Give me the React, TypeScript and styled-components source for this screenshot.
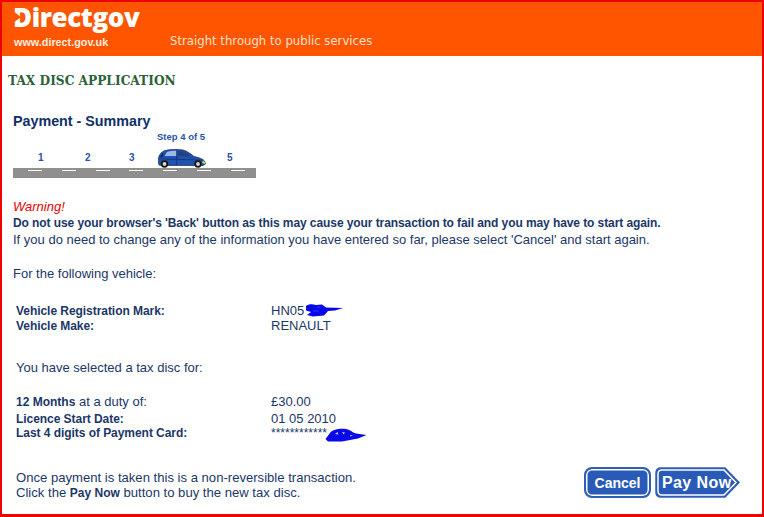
import React from "react";
import styled, { createGlobalStyle } from "styled-components";

const GlobalStyle = createGlobalStyle`
  html, body {
    margin: 0;
    padding: 0;
    background: #fff;
  }
  body {
    font-family: "Liberation Sans", Arial, sans-serif;
  }
`;

function CarIcon() {
  return (
    <svg width="48" height="19" viewBox="0 0 48 19">
      <path
        d="M0.500 14 L0.500 9 C1 6 3 3 7 1.500 C12 0.200 20 0.200 25 1 C29 2 33 5 36 7.500 C41 8.500 45 10 46.500 12 L47.500 15 L45 16.500 L4 16.500 L1 16 Z"
        fill="#1f52ae"
        stroke="#12285e"
        strokeWidth="0.700"
      />
      <path d="M9 3 C12 1.800 15 1.800 18 1.800 L18 7 L6.500 7 Z" fill="#9db8e2" />
      <path d="M19.500 1.800 C24 2 29 4.500 33 7.300 L19.500 7 Z" fill="#27407c" />
      <path d="M2 8 L5 3.500 L5.500 7 L3 9 Z" fill="#0f2a6a" />
      <path d="M18.700 7 L18.700 16 M3 10 L45 11" stroke="#12285e" strokeWidth="0.600" fill="none" />
      <path d="M45 11.500 L47.500 13.500 L47 15 L44 14 Z" fill="#c8d84a" />
      <circle cx="6.500" cy="15" r="3.700" fill="#161616" />
      <circle cx="6.500" cy="15" r="1.900" fill="#d8d8c8" />
      <circle cx="40" cy="15" r="3.700" fill="#161616" />
      <circle cx="40" cy="15" r="1.900" fill="#d8d8c8" />
    </svg>
  );
}

function RegScribble() {
  return (
    <svg width="39" height="14" viewBox="0 0 39 14">
      <path
        d="M1 3 C4 0.500 8 1 11 2 L17 1.500 L21 4.500 L38 5 L30 7.500 L23 8 L19 12.500 L8 13.500 L2 12 L6 9 L1 7.500 Z"
        fill="#0808e8"
      />
      <path d="M12 4 L16 4 M8 8 L14 8" stroke="#3a3af0" strokeWidth="0.800" />
    </svg>
  );
}

function CardScribble() {
  return (
    <svg width="42" height="14" viewBox="0 0 42 14">
      <path
        d="M0.500 11 L5 5 C8 1 15 0.500 21 1 C25 1.500 27 4.500 31 5.500 L41.500 7 L33 10.500 L25 12 L17 13.500 L3 13.500 Z"
        fill="#0808e8"
      />
      <path d="M10 6 L12.500 4 L13.500 6.500 Z M17 4 L20 4.500 L18.500 6.500 Z M25 7 L28 7.500 L25.500 8.500 Z" fill="#c8c8ff" />
    </svg>
  );
}

export default function App() {
  return (
    <Frame>
      <GlobalStyle />
      <Header>
        <Brand>
          <LogoWrap>
            <Logo>Directgov</Logo>
            <LogoNotch />
          </LogoWrap>
          <BrandUrl>www.direct.gov.uk</BrandUrl>
        </Brand>
        <Tagline>Straight through to public services</Tagline>
      </Header>

      <Main>
        <AppTitle>TAX DISC APPLICATION</AppTitle>
        <PageTitle>Payment - Summary</PageTitle>

        <Progress>
          <StepCaption>Step 4 of 5</StepCaption>
          <Steps>
            <StepNumber $width={47}>1</StepNumber>
            <StepNumber $width={44}>2</StepNumber>
            <StepNumber $width={42}>3</StepNumber>
            <CarSlot>
              <CarIcon />
            </CarSlot>
            <StepNumber $width={30}>5</StepNumber>
          </Steps>
          <Road>
            {Array.from({ length: 7 }).map((_, i) => (
              <RoadDash key={i} />
            ))}
          </Road>
        </Progress>

        <WarningTitle>Warning!</WarningTitle>
        <WarningBold>
          Do not use your browser's 'Back' button as this may cause your transaction to fail and you
          may have to start again.
        </WarningBold>
        <Line $top={2}>
          If you do need to change any of the information you have entered so far, please select
          'Cancel' and start again.
        </Line>

        <Line $top={20}>For the following vehicle:</Line>

        <InfoGroup $top={22}>
          <InfoRow>
            <InfoLabel>Vehicle Registration Mark:</InfoLabel>
            <InfoValue>
              HN05
              <ScribbleSlot $left={34} $top={0}>
                <RegScribble />
              </ScribbleSlot>
            </InfoValue>
          </InfoRow>
          <InfoRow>
            <InfoLabel>Vehicle Make:</InfoLabel>
            <InfoValue>RENAULT</InfoValue>
          </InfoRow>
        </InfoGroup>

        <Indented $top={28}>You have selected a tax disc for:</Indented>

        <InfoGroup $top={19}>
          <InfoRow>
            <InfoPlain>
              <b>12 Months</b> at a duty of:
            </InfoPlain>
            <InfoValue>£30.00</InfoValue>
          </InfoRow>
          <InfoRow $shift={2}>
            <InfoLabel>Licence Start Date:</InfoLabel>
            <InfoValue>01 05 2010</InfoValue>
          </InfoRow>
          <InfoRow $shift={-1}>
            <InfoLabel>Last 4 digits of Payment Card:</InfoLabel>
            <MaskedValue>
              ************
              <ScribbleSlot $left={54} $top={2}>
                <CardScribble />
              </ScribbleSlot>
            </MaskedValue>
          </InfoRow>
        </InfoGroup>

        <Footer>
          <FooterText>
            Once payment is taken this is a non-reversible transaction.
            <br />
            Click the <FooterStrong>Pay Now</FooterStrong> button to buy the new tax disc.
          </FooterText>
          <Actions>
            <CancelButton>Cancel</CancelButton>
            <PayButton>
              <PayShape viewBox="0 0 85 31" preserveAspectRatio="none">
                <path
                  d="M6 1 H70 L84 15.500 L70 30 H6 Q1 30 1 25 V6 Q1 1 6 1 Z"
                  fill="#2a5ab8"
                  stroke="#2f5fb4"
                  strokeWidth="1.500"
                />
                <path
                  d="M7 3 H69 L81 15.500 L69 28 H7 Q3 28 3 24 V7 Q3 3 7 3 Z"
                  fill="none"
                  stroke="#ffffff"
                  strokeWidth="1.500"
                />
              </PayShape>
              <PayLabel>Pay Now</PayLabel>
            </PayButton>
          </Actions>
        </Footer>
      </Main>
    </Frame>
  );
}

const Frame = styled.div`
  width: 764px;
  height: 517px;
  box-sizing: border-box;
  border: 2px solid #f00000;
  border-bottom-width: 3px;
  background: #fff;
  color: #1b3768;
  overflow: hidden;
`;

const Header = styled.header`
  height: 54px;
  background: #ff5500;
  display: flex;
  align-items: flex-start;
  color: #fff;
`;

const Brand = styled.div`
  width: 168px;
  padding: 3px 0 0 12px;
  box-sizing: border-box;
  display: flex;
  flex-direction: column;
`;

const LogoWrap = styled.div`
  position: relative;
  height: 24px;
`;

const Logo = styled.div`
  font-family: "Open Sans", "Liberation Sans", sans-serif;
  font-weight: 800;
  font-size: 26px;
  line-height: 24px;
  letter-spacing: -0.4px;
  margin-left: -1px;
`;

const LogoNotch = styled.span`
  position: absolute;
  left: -1px;
  top: 6px;
  width: 0;
  height: 0;
  border-top: 6px solid transparent;
  border-bottom: 6px solid transparent;
  border-left: 8px solid #ff5500;
`;

const BrandUrl = styled.div`
  font-size: 10.800px;
  font-weight: 700;
  line-height: 13px;
  margin-top: 7px;
  color: #ffeee2;
`;

const Tagline = styled.div`
  font-family: "DejaVu Sans", sans-serif;
  font-size: 11.700px;
  line-height: 14px;
  margin-top: 32px;
  color: #ffe0c8;
`;

const Main = styled.main`
  padding: 0 0 0 11px;
  display: flex;
  flex-direction: column;
  align-items: flex-start;
`;

const AppTitle = styled.h1`
  margin: 17px 0 0 -5px;
  font-family: "DejaVu Serif", serif;
  font-size: 12.200px;
  line-height: 16px;
  font-weight: 700;
  color: #2c6038;
`;

const PageTitle = styled.h2`
  margin: 24px 0 0;
  font-size: 14.300px;
  line-height: 17px;
  font-weight: 700;
  color: #0f3068;
`;

const Progress = styled.div`
  width: 243px;
  display: flex;
  flex-direction: column;
  margin-top: 1px;
  color: #2a52a8;
  font-weight: 700;
`;

const StepCaption = styled.div`
  font-size: 9.500px;
  line-height: 12px;
  padding-left: 144px;
`;

const Steps = styled.div`
  display: flex;
  align-items: flex-end;
  height: 25px;
  padding-left: 5px;
`;

const StepNumber = styled.span<{ $width: number }>`
  width: ${(p) => p.$width}px;
  font-size: 10px;
  line-height: 10px;
  padding: 0 0 5px 20px;
  box-sizing: border-box;
  text-align: left;
`;

const CarSlot = styled.div`
  width: 56px;
  height: 19px;
  padding-left: 7px;
  box-sizing: border-box;
  flex: none;
`;

const Road = styled.div`
  height: 10px;
  background: #8f8f8f;
  display: flex;
  justify-content: space-between;
  padding: 2px 11px 0 15px;
  box-sizing: border-box;
`;

const RoadDash = styled.span`
  width: 14px;
  height: 1px;
  background: #fff;
`;

const WarningTitle = styled.div`
  margin-top: 22px;
  font-size: 13px;
  line-height: 14px;
  font-style: italic;
  color: #ee0000;
`;

const WarningBold = styled.div`
  margin-top: 2px;
  font-size: 12px;
  letter-spacing: -0.085px;
  line-height: 15px;
  font-weight: 700;
  color: #1b3768;
`;

const Line = styled.div<{ $top: number }>`
  margin-top: ${(p) => p.$top}px;
  font-size: 13px;
  line-height: 14px;
`;

const Indented = styled(Line)`
  margin-left: 3px;
`;

const InfoGroup = styled.div<{ $top: number }>`
  margin: ${(p) => p.$top}px 0 0 3px;
  display: flex;
  flex-direction: column;
`;

const InfoRow = styled.div<{ $shift?: number }>`
  display: flex;
  height: 15px;
  margin-top: ${(p) => p.$shift ?? 0}px;
  align-items: center;
  font-size: 13px;
`;

const InfoLabel = styled.div`
  width: 255px;
  font-size: 12px;
  letter-spacing: -0.05px;
  font-weight: 700;
`;

const InfoPlain = styled.div`
  width: 255px;

  b {
    font-size: 12px;
  }
`;

const InfoValue = styled.div`
  position: relative;
`;

const MaskedValue = styled(InfoValue)`
  font-size: 12px;
`;

const ScribbleSlot = styled.span<{ $left: number; $top: number }>`
  position: absolute;
  left: ${(p) => p.$left}px;
  top: ${(p) => p.$top}px;
  line-height: 0;
`;

const Footer = styled.div`
  width: 724px;
  margin: 20px 0 0 3px;
  display: flex;
  justify-content: space-between;
  align-items: flex-start;
`;

const FooterText = styled.div`
  font-size: 13.100px;
  line-height: 15px;
  margin-top: 10px;
`;

const FooterStrong = styled.b`
  font-size: 12px;
`;

const Actions = styled.div`
  display: flex;
  gap: 4px;
  margin-top: 7px;
`;

const CancelButton = styled.button`
  width: 67px;
  height: 31px;
  padding: 0;
  border: 2px solid #2f5fb4;
  border-radius: 8px;
  background: #2a5ab8;
  box-shadow: inset 0 0 0 1.500px #fff;
  color: #fff;
  font-family: "Liberation Sans", sans-serif;
  font-size: 14px;
  font-weight: 700;
`;

const PayButton = styled.button`
  position: relative;
  width: 85px;
  height: 31px;
  padding: 0;
  border: 0;
  background: transparent;
`;

const PayShape = styled.svg`
  position: absolute;
  inset: 0;
  width: 100%;
  height: 100%;
`;

const PayLabel = styled.span`
  position: relative;
  display: block;
  text-align: left;
  padding-left: 7px;
  color: #fff;
  font-family: "Liberation Sans", sans-serif;
  font-size: 16px;
  font-weight: 700;
  letter-spacing: 0.4px;
`;
